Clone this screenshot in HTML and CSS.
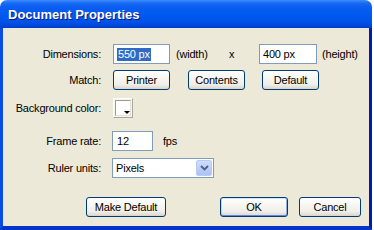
FILE: index.html
```html
<!DOCTYPE html>
<html>
<head>
<meta charset="utf-8">
<link rel="stylesheet" href="styles.css">
</head>
<body>
<div class="window">
  <div class="titlebar"><span class="title">Document Properties</span></div>
  <div class="client">
    <div class="row r1">
      <span class="label">Dimensions:</span>
      <span class="field f-width"><span class="sel">550 px</span></span>
      <span class="unit u-width">(width)</span>
      <span class="times">x</span>
      <span class="field f-height">400 px</span>
      <span class="unit u-height">(height)</span>
    </div>
    <div class="row r2">
      <span class="label">Match:</span>
      <span class="btn b-match first">Printer</span>
      <span class="btn b-match m18">Contents</span>
      <span class="btn b-match m17">Default</span>
    </div>
    <div class="row r3">
      <span class="label">Background color:</span>
      <span class="swatch"><span class="swatch-inner"></span></span>
    </div>
    <div class="row r4">
      <span class="label">Frame rate:</span>
      <span class="field f-rate">12</span>
      <span class="unit u-fps">fps</span>
    </div>
    <div class="row r5">
      <span class="label">Ruler units:</span>
      <span class="select">
        <span class="select-text">Pixels</span>
        <span class="drop"><svg width="9" height="6" viewBox="0 0 9 6"><path d="M1 1 L4.5 4.5 L8 1" fill="none" stroke="#4D6185" stroke-width="1.8"/></svg></span>
      </span>
    </div>
    <div class="row r6">
      <span class="btn b-make">Make Default</span>
      <span class="btn b-ok default">OK</span>
      <span class="btn b-cancel">Cancel</span>
    </div>
  </div>
</div>
</body>
</html>
```
FILE: styles.css
```css
html, body {
  margin: 0;
  padding: 0;
  background: #ffffff;
}
body {
  width: 374px;
  height: 230px;
  overflow: hidden;
  font-family: "Liberation Sans", Arial, sans-serif;
  font-size: 11px;
  letter-spacing: -0.2px;
  color: #000;
}
.window {
  width: 372px;
  height: 230px;
  display: flex;
  flex-direction: column;
  border-radius: 7px 7px 0 0;
  overflow: hidden;
}
.titlebar {
  height: 28px;
  flex: none;
  display: flex;
  align-items: center;
  padding-left: 8px;
  padding-top: 1px;
  box-sizing: border-box;
  background: linear-gradient(#3D8EF8 0, #1A6CF5 3px, #0A5EF0 7px, #0058EE 16px, #0052E8 22px, #0046D8 26px, #003CC8 28px);
}
.title {
  color: #fff;
  font-weight: bold;
  font-size: 13px;
  text-shadow: 1px 1px 0 #0A1883;
  letter-spacing: 0;
}
.client {
  flex: 1;
  background: #ECE9D8;
  border-left: 3px solid #0B4BE6;
  border-right: 3px solid #001CB0;
  border-bottom: 4px solid #0634C8;
  display: flex;
  flex-direction: column;
}
.row {
  display: flex;
  align-items: center;
  height: 20px;
  flex: none;
}
.r1 { margin-top: 16px; }
.r2 { margin-top: 6px; }
.r3 { margin-top: 8px; }
.r4 { margin-top: 13px; }
.r5 { margin-top: 7px; }
.r6 { margin-top: 19px; padding-left: 83px; }
.label {
  width: 98px;
  text-align: right;
  flex: none;
  white-space: nowrap;
}
.field {
  box-sizing: border-box;
  height: 20px;
  border: 1px solid #7F9DB9;
  background: #fff;
  display: flex;
  align-items: center;
  padding-left: 3px;
  flex: none;
}
.f-width { margin-left: 12px; width: 57px; }
.f-height { width: 58px; }
.f-rate { margin-left: 11px; width: 41px; padding-left: 4px; }
.sel {
  background: #316AC5;
  color: #fff;
  line-height: 13px;
  padding: 0 1px;
}
.unit { flex: none; }
.u-width { margin-left: 6px; width: 53px; }
.times { width: 30px; }
.u-height { margin-left: 5px; }
.u-fps { margin-left: 10px; }
.btn {
  box-sizing: border-box;
  height: 20px;
  border: 1px solid #003C74;
  border-radius: 3px;
  background: linear-gradient(#FFFFFF 0, #F8F7F3 35%, #EFEEE8 75%, #E2DED3 92%, #D6D0C5 100%);
  display: flex;
  align-items: center;
  justify-content: center;
  flex: none;
}
.b-match { width: 57px; }
.first { margin-left: 12px; }
.m18 { margin-left: 18px; }
.m17 { margin-left: 17px; }
.b-make { width: 80px; }
.b-ok { width: 68px; margin-left: 54px; }
.b-cancel { width: 62px; margin-left: 11px; }
.default {
  box-shadow: inset 0 1px 0 #CEE7FF, inset 0 -1px 0 #6982EE, inset 1px 0 0 #B8D6FB, inset -1px 0 0 #89ADE4;
}
.swatch {
  margin-left: 12px;
  width: 20px;
  height: 20px;
  box-sizing: border-box;
  border: 1px solid;
  border-color: #FFFFFF #ACA899 #ACA899 #FFFFFF;
  background: #F4F3EE;
  padding: 1px;
  position: relative;
  flex: none;
  margin-top: -1px;
}
.swatch-inner {
  display: block;
  width: 100%;
  height: 100%;
  box-sizing: border-box;
  background: #fff;
  border: 1px solid;
  border-color: #A09C90 #E6E3D8 #E6E3D8 #A09C90;
}
.swatch::after {
  content: "";
  position: absolute;
  right: 2px;
  bottom: 3px;
  border-left: 3px solid transparent;
  border-right: 3px solid transparent;
  border-top: 3px solid #000;
}
.select {
  margin-left: 11px;
  width: 102px;
  height: 20px;
  box-sizing: border-box;
  border: 1px solid #7F9DB9;
  background: #fff;
  display: flex;
  align-items: center;
  padding: 1px;
  flex: none;
}
.select-text { padding-left: 2px; flex: 1; }
.drop {
  width: 16px;
  height: 16px;
  box-sizing: border-box;
  border: 1px solid #B9CBF3;
  border-radius: 2px;
  background: linear-gradient(#D0DEFD, #B9CCF8 60%, #AEC3F5);
  display: flex;
  align-items: center;
  justify-content: center;
}
```
